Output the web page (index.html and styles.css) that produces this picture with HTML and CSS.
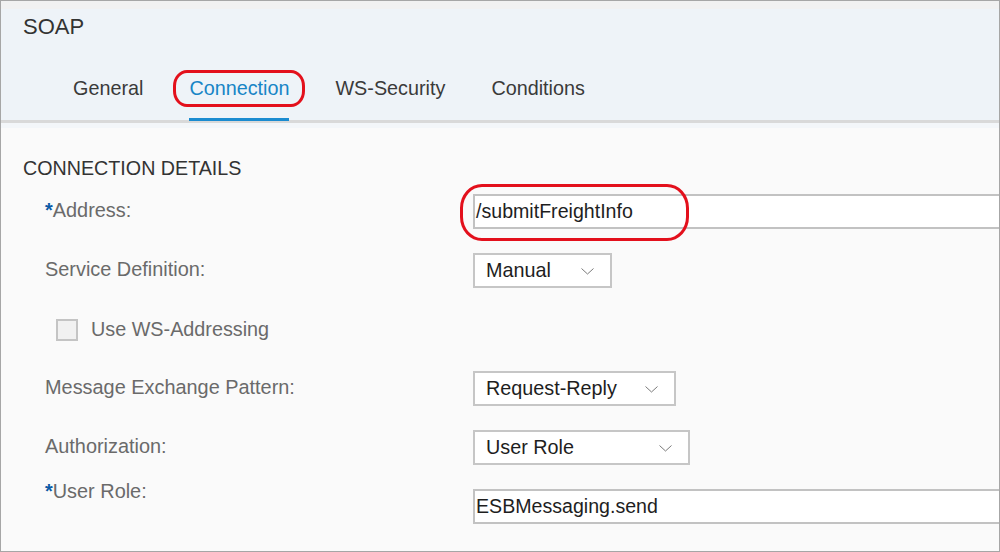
FILE: index.html
```html
<!DOCTYPE html>
<html>
<head>
<meta charset="utf-8">
<link rel="stylesheet" href="styles.css">
</head>
<body>
<div class="frame">
  <div class="topstrip"></div>
  <header class="header">
    <div class="title">SOAP</div>
    <nav class="tabs">
      <span class="tab">General</span>
      <span class="tab active">Connection<span class="ring ring-tab"></span></span>
      <span class="tab">WS-Security</span>
      <span class="tab">Conditions</span>
    </nav>
  </header>
  <div class="band"></div>
  <main class="content">
    <div class="section-title">CONNECTION DETAILS</div>
    <div class="form">
      <div class="row">
        <div class="label"><span class="req">*</span>Address:</div>
        <div class="control">
          <div class="input wide">/submitFreightInfo<span class="ring ring-input"></span></div>
        </div>
      </div>
      <div class="row">
        <div class="label">Service Definition:</div>
        <div class="control">
          <div class="select w-manual"><span>Manual</span><svg class="chev" width="13" height="7" viewBox="0 0 13 7"><polyline points="0.5,0.5 6.5,6 12.5,0.5" fill="none" stroke="#7a7a7a" stroke-width="1"/></svg></div>
        </div>
      </div>
      <div class="row">
        <label class="check"><span class="box"></span>Use WS-Addressing</label>
      </div>
      <div class="row">
        <div class="label">Message Exchange Pattern:</div>
        <div class="control">
          <div class="select w-rr"><span>Request-Reply</span><svg class="chev" width="13" height="7" viewBox="0 0 13 7"><polyline points="0.5,0.5 6.5,6 12.5,0.5" fill="none" stroke="#7a7a7a" stroke-width="1"/></svg></div>
        </div>
      </div>
      <div class="row">
        <div class="label">Authorization:</div>
        <div class="control">
          <div class="select w-ur"><span>User Role</span><svg class="chev" width="13" height="7" viewBox="0 0 13 7"><polyline points="0.5,0.5 6.5,6 12.5,0.5" fill="none" stroke="#7a7a7a" stroke-width="1"/></svg></div>
        </div>
      </div>
      <div class="row last">
        <div class="label top"><span class="req">*</span>User Role:</div>
        <div class="control">
          <div class="input wide">ESBMessaging.send</div>
        </div>
      </div>
    </div>
  </main>
</div>
</body>
</html>
```

FILE: styles.css
```css
* { box-sizing: border-box; }
html, body { margin: 0; padding: 0; }
body {
  width: 1000px;
  height: 552px;
  font-family: "Liberation Sans", Arial, sans-serif;
  background: #fafafa;
}
.frame {
  width: 1000px;
  height: 552px;
  border: 1px solid #a6a6a6;
  background: #fafafa;
  overflow: hidden;
  position: relative;
}
.topstrip {
  height: 8px;
  background: #f1f1f1;
}
.header {
  background: #eef3f8;
  padding: 5px 0 0 22px;
  border-bottom: 3px solid #d9d9d9;
}
.title {
  font-size: 22px;
  line-height: 26px;
  color: #333;
}
.tabs {
  display: flex;
  gap: 46px;
  padding-left: 50px;
  margin-top: 36px;
  margin-bottom: -1px;
}
.tab {
  position: relative;
  font-size: 19.8px;
  line-height: 24px;
  color: #3a3a3a;
  padding-bottom: 18px;
  border-bottom: 3px solid transparent;
}
.tab.active {
  color: #1785c6;
  border-bottom-color: #1a8bd0;
}
.ring {
  position: absolute;
  border: 3px solid #e3101c;
  pointer-events: none;
}
.ring-tab {
  left: -16px;
  right: -16px;
  top: -6px;
  bottom: 11px;
  border-radius: 14px / 16px;
}
.band {
  height: 5px;
  background: #f3f6f9;
}
.content {
  padding: 28px 0 0 22px;
}
.section-title {
  font-size: 19.7px;
  line-height: 24px;
  color: #333;
}
.form {
  margin-top: 2px;
  padding-left: 22px;
  display: flex;
  flex-direction: column;
}
.row {
  height: 59px;
  display: flex;
  align-items: center;
}
.label {
  width: 428px;
  flex: none;
  font-size: 19.9px;
  line-height: 24px;
  color: #6a6a6a;
  margin-top: -3px;
}
.label.top {
  align-self: flex-start;
  margin-top: 2px;
}
.req {
  color: #0b5aa6;
  font-weight: bold;
}
.control {
  flex: 1;
  display: flex;
}
.input {
  position: relative;
  height: 35px;
  border: 2px solid #c2c2c2;
  border-right: none;
  background: #fff;
  font-size: 19.6px;
  line-height: 31px;
  padding-left: 1px;
  color: #1e1e1e;
}
.wide {
  flex: 1;
  margin-right: -10px;
}
.ring-input {
  left: -15px;
  top: -12px;
  width: 229px;
  height: 57px;
  border-radius: 22px / 24px;
}
.select {
  height: 35px;
  border: 2px solid #c6c6c6;
  background: #fff;
  display: flex;
  align-items: center;
  justify-content: space-between;
  padding: 0 16px 0 11px;
  font-size: 19.8px;
  color: #1e1e1e;
}
.chev { display: block; margin-top: 1px; }
.w-manual { width: 139px; }
.w-rr { width: 203px; }
.w-ur { width: 217px; }
.check {
  display: flex;
  align-items: center;
  margin-left: 11px;
  font-size: 19.8px;
  color: #6a6a6a;
}
.box {
  width: 22px;
  height: 22px;
  border: 2px solid #c4c4c4;
  background: #f1f1f1;
  margin-right: 13px;
}
```
